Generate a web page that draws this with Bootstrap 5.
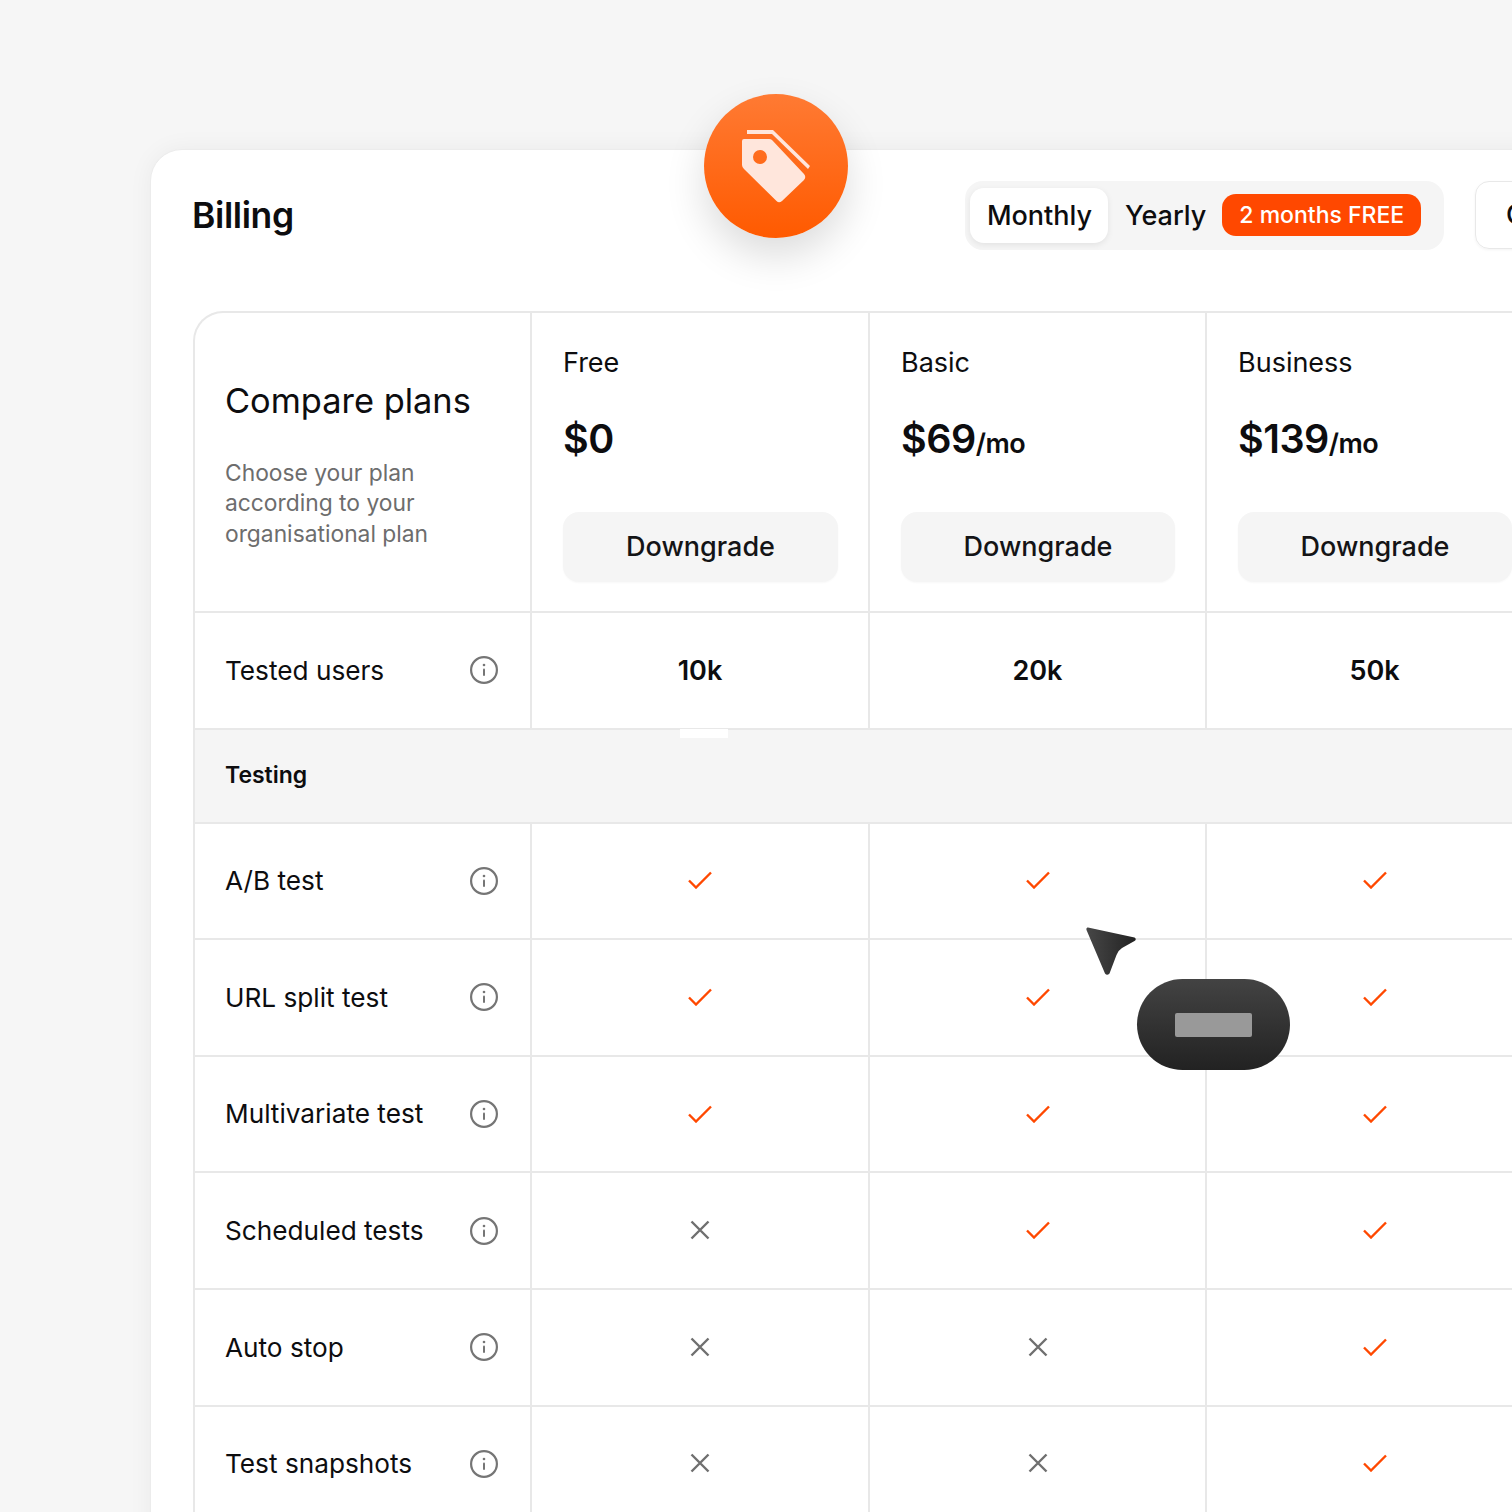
<!doctype html>
<html lang="en">

<head>
    <meta charset="utf-8">
    <meta name="viewport" content="width=device-width, initial-scale=1">
    <link href="https://cdn.jsdelivr.net/npm/bootstrap@5.3.3/dist/css/bootstrap.min.css" rel="stylesheet">
    <title>Billing</title>
    <style>
        html, body { height: 1512px; overflow: hidden; }
        body { background: #f6f6f6; font-family: Inter, "Liberation Sans", sans-serif; color: #0d0d0f; }
        .page-wrap { position: relative; width: 1512px; height: 1512px; overflow: hidden; padding: 149px 0 0 150px; }
        .billing-panel { width: 1500px; height: 1500px; background: #fff; border: 1px solid #ececec; border-radius: 32px; padding: 0 41px 0 42px; box-shadow: 0 0 24px rgba(0, 0, 0, .05); }
        .panel-head { height: 161px; margin-left: -1px; }
        .panel-title { font-size: 35.5px; font-weight: 600; letter-spacing: -.4px; margin: 0; }
        .title-box { height: 133px; }
        .period-switch { background: #f5f5f5; border-radius: 18px; height: 69px; width: 479px; margin-top: 31px; padding: 7px 5px; flex: none; }
        .period-opt { font-size: 27px; font-weight: 500; line-height: 1; padding: 0 16px 0 17px; height: 55px; }
        .period-on { background: #fff; border-radius: 14px; box-shadow: 0 2px 6px rgba(0, 0, 0, .08); width: 138px; padding: 0 0 0 1px; }
        .free-tag { background: #ff4800; color: #fff; font-size: 23px; font-weight: 500; border-radius: 14px; width: 199px; height: 42px; margin-bottom: 2px; padding-top: 2px; }
        .other-btn { width: 133px; height: 68px; margin-left: 31px; margin-top: 31px; border: 1px solid #e8e8e8; border-radius: 14px; font-size: 27px; font-weight: 500; padding-left: 30px; flex: none; box-shadow: 0 1px 3px rgba(0, 0, 0, .05); }
        .plan-grid { width: 1349px; table-layout: fixed; border-collapse: separate; border-spacing: 0; border-top: 2px solid #e8e8e8; border-left: 2px solid #e8e8e8; border-top-left-radius: 30px; }
        .plan-grid td { padding: 0; border-bottom: 2px solid #e8e8e8; border-right: 2px solid #e8e8e8; vertical-align: middle; }
        .plan-grid tr:first-child td:first-child { border-top-left-radius: 28px; }
        .row-head { height: 300px; }
        .row-feat { height: 116.6px; }
        .row-sect { height: 94px; background: #f5f5f5; }
        .row-sect td { padding: 0 0 0 30px !important; font-size: 23px; font-weight: 600; }
        .intro-cell { padding: 5px 30px 0 !important; }
        .intro-title { font-size: 34.4px; font-weight: 400; margin: 0 0 37px; line-height: 1.2; }
        .intro-text { font-size: 22.8px; line-height: 30.5px; color: #6d6d6d; margin: 0; }
        .tier-cell { padding: 0 30px 0 31px !important; vertical-align: top !important; }
        .tier-name { font-size: 27px; margin-top: 34px; line-height: 32px; }
        .tier-price { font-size: 39.5px; font-weight: 600; line-height: 50px; margin-top: 35px; height: 50px; letter-spacing: -.5px; }
        .tier-price span { font-size: 27px; }
        .tier-btn { display: block; width: 100%; height: 70px; margin-top: 48px; background: #f5f5f5; border: 0; border-radius: 16px; font-size: 27px; font-weight: 500; color: #141416; box-shadow: 0 1px 2px rgba(0, 0, 0, .03); }
        .feat-name { padding: 0 32px 0 30px !important; font-size: 26.2px; }
        .feat-val { text-align: center; font-size: 27px; font-weight: 600; padding-top: 2px !important; }
        .feat-val svg { display: block; margin: -3px auto 0; }
        .badge-disc { position: absolute; left: 704px; top: 94px; width: 144px; height: 144px; border-radius: 50%; background: linear-gradient(180deg, #ff7a33, #ff5a00); box-shadow: 0 18px 40px rgba(0, 0, 0, .14); }
        .badge-disc svg { display: block; }
        .white-chip { position: absolute; left: 680px; top: 729px; width: 48px; height: 9px; background: #fff; }
        .cursor-arrow { position: absolute; left: 1086px; top: 927px; }
        .cursor-pill { position: absolute; left: 1137px; top: 979px; width: 153px; height: 91px; border-radius: 46px; background: linear-gradient(180deg, #434343, #222); }
        .cursor-label { width: 77px; height: 24px; background: #999; border-radius: 2px; }
    </style>
</head>

<body>
    <svg width="0" height="0" class="position-absolute">
        <symbol id="ico-info" viewBox="0 0 28 28">
            <circle cx="14" cy="14" r="12.9" fill="none" stroke="#757575" stroke-width="2.2" />
            <rect x="13" y="12.5" width="2" height="7.5" rx="1" fill="#757575" />
            <circle cx="14" cy="9" r="1.3" fill="#757575" />
        </symbol>
        <symbol id="ico-yes" viewBox="0 0 24 18">
            <path d="M1 9.5 L8 16.5 L23 1.5" fill="none" stroke="#ff4800" stroke-width="2.4" />
        </symbol>
        <symbol id="ico-no" viewBox="0 0 20 20">
            <path d="M1.5 1.5 L18.5 18.5 M18.5 1.5 L1.5 18.5" fill="none" stroke="#6f6f6f" stroke-width="2.4" />
        </symbol>
    </svg>

    <div class="page-wrap">
        <div class="billing-panel">
            <div class="panel-head d-flex align-items-start">
                <div class="title-box d-flex align-items-center">
                    <h1 class="panel-title">Billing</h1>
                </div>
                <div class="period-switch d-flex align-items-center ms-auto">
                    <div class="period-opt period-on d-flex align-items-center justify-content-center">Monthly</div>
                    <div class="period-opt d-flex align-items-center">Yearly</div>
                    <div class="free-tag d-flex align-items-center justify-content-center">2 months FREE</div>
                </div>
                <div class="other-btn d-flex align-items-center">Current</div>
            </div>
            <table class="plan-grid">
                <colgroup>
                    <col style="width:337px">
                    <col style="width:338px">
                    <col style="width:337px">
                    <col style="width:337px">
                </colgroup>
                <tbody id="plan-rows">
                    <tr class="row-head">
                        <td class="intro-cell">
                            <h2 class="intro-title">Compare plans</h2>
                            <p class="intro-text">Choose your plan<br>according to your<br>organisational plan</p>
                        </td>
                        <td class="tier-cell">
                            <div class="tier-name">Free</div>
                            <div class="tier-price">$0</div>
                            <button class="tier-btn">Downgrade</button>
                        </td>
                        <td class="tier-cell">
                            <div class="tier-name">Basic</div>
                            <div class="tier-price">$69<span>/mo</span></div>
                            <button class="tier-btn">Downgrade</button>
                        </td>
                        <td class="tier-cell">
                            <div class="tier-name">Business</div>
                            <div class="tier-price">$139<span>/mo</span></div>
                            <button class="tier-btn">Downgrade</button>
                        </td>
                    </tr>
                </tbody>
            </table>
        </div>

        <div class="badge-disc">
            <svg width="144" height="144" viewBox="704 94 144 144">
                <path d="M744 139 H769 Q771 139 772 140 L804 174 Q806.500 177 804 180 L782 201 Q779 203.500 776.500 201 L744 169 Q742 167 742 165 V141 Q742 139 744 139 Z M760 150 A7 7 0 1 0 760 164 A7 7 0 1 0 760 150 Z" fill="#ffe6dc" fill-rule="evenodd" />
                <path d="M747 130 H773 L810 166 L808 169 L772 134 H747 Z" fill="#ffe6dc" />
            </svg>
        </div>
        <div class="white-chip"></div>
        <svg class="cursor-arrow" width="50" height="48" viewBox="0 0 50 48">
            <defs>
                <linearGradient id="arrow-fill" x1="0" x2="1" y1="0" y2="0">
                    <stop offset="0" stop-color="#474747" />
                    <stop offset="1" stop-color="#222" />
                </linearGradient>
            </defs>
            <path d="M2 0.500 L48.500 10.500 Q51 12 48.500 14 L36 21 Q32 23.500 30.500 28 L23.500 46.500 Q21 49 19 46.500 L0.500 3 Q0 0 2 0.500 Z" fill="url(#arrow-fill)" />
        </svg>
        <div class="cursor-pill d-flex align-items-center justify-content-center">
            <div class="cursor-label"></div>
        </div>
    </div>

    <script>
        // 1 = check, 0 = cross, string = plain value
        const filas = [
            { nombre: 'Tested users', valores: ['10k', '20k', '50k'] },
            { seccion: 'Testing' },
            { nombre: 'A/B test', valores: [1, 1, 1] },
            { nombre: 'URL split test', valores: [1, 1, 1] },
            { nombre: 'Multivariate test', valores: [1, 1, 1] },
            { nombre: 'Scheduled tests', valores: [0, 1, 1] },
            { nombre: 'Auto stop', valores: [0, 0, 1] },
            { nombre: 'Test snapshots', valores: [0, 0, 1] }
        ];

        function celdaValor(valor) {
            if (valor === 1) return '<svg width="24" height="18"><use href="#ico-yes"/></svg>';
            if (valor === 0) return '<svg width="20" height="20"><use href="#ico-no"/></svg>';
            return valor;
        }

        const cuerpo = document.getElementById('plan-rows');
        filas.forEach((fila) => {
            const tr = document.createElement('tr');
            if (fila.seccion) {
                tr.className = 'row-sect';
                tr.innerHTML = `<td colspan="4">${fila.seccion}</td>`;
            } else {
                tr.className = 'row-feat';
                tr.innerHTML = `<td class="feat-name"><div class="d-flex align-items-center justify-content-between">
                    <span>${fila.nombre}</span><svg width="28" height="28"><use href="#ico-info"/></svg></div></td>` +
                    fila.valores.map(v => `<td class="feat-val">${celdaValor(v)}</td>`).join('');
            }
            cuerpo.appendChild(tr);
        });
    </script>
    <script src="https://cdn.jsdelivr.net/npm/bootstrap@5.3.3/dist/js/bootstrap.bundle.min.js"></script>
</body>

</html>
